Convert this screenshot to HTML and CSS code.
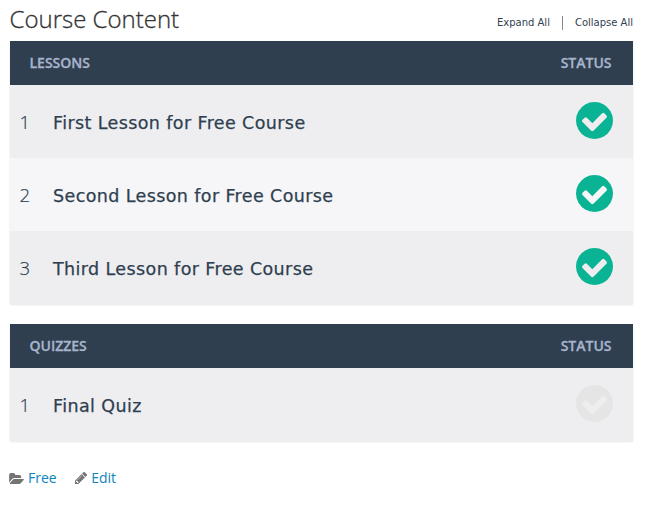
FILE: index.html
```html
<!DOCTYPE html>
<html lang="en">
<head>
<meta charset="utf-8">
<title>Course Content</title>
<link rel="stylesheet" href="styles.css">
</head>
<body>
<svg class="symbols" aria-hidden="true">
  <symbol id="check" viewBox="128 128 1536 1536"><path d="M1412 734q0-28-18-46l-91-90q-19-19-45-19t-45 19l-408 407-226-226q-19-19-45-19t-45 19l-91 90q-18 18-18 46 0 27 18 45l362 362q19 19 45 19 27 0 46-19l543-543q18-18 18-45zm252 162q0 209-103 385.5t-279.5 279.5-385.5 103-385.5-103-279.5-279.5-103-385.5 103-385.5 279.5-279.5 385.5-103 385.5 103 279.5 279.5 103 385.5z"/></symbol>
  <symbol id="folder" viewBox="64 128 1880 1408"><path d="M1943 952q0 31-31 66l-336 396q-43 51-120.5 86.5t-143.5 35.5h-1088q-34 0-60.5-13t-26.5-43q0-31 31-66l336-396q43-51 120.5-86.5t143.5-35.5h1088q34 0 60.5 13t26.5 43zm-343-344v160h-832q-94 0-197 47.5t-164 119.5l-337 396-5 6q0-4-.5-12.5t-.5-12.5v-960q0-92 66-158t158-66h320q92 0 158 66t66 158v32h544q92 0 158 66t66 158z"/></symbol>
  <symbol id="pencil" viewBox="128 149 1515 1515"><path d="M491 1536l91-91-235-235-91 91v107h128v128h107zm523-928q0-22-22-22-10 0-17 7l-542 542q-7 7-7 17 0 22 22 22 10 0 17-7l542-542q7-7 7-17zm-54-192l416 416-832 832h-416v-416zm683 96q0 53-37 90l-166 166-416-416 166-165q36-38 90-38 53 0 91 38l235 234q37 39 37 91z"/></symbol>
</svg>
<main class="course">
  <header class="top">
    <h1>Course Content</h1>
    <nav class="toggles"><a>Expand All</a><span class="divider"></span><a>Collapse All</a></nav>
  </header>
  <section class="panel">
    <div class="heading"><span>LESSONS</span><span>STATUS</span></div>
    <div class="row"><span class="num">1</span><a class="title">First Lesson for Free Course</a><svg class="status"><use href="#check"/></svg></div>
    <div class="row even"><span class="num">2</span><a class="title">Second Lesson for Free Course</a><svg class="status"><use href="#check"/></svg></div>
    <div class="row"><span class="num">3</span><a class="title">Third Lesson for Free Course</a><svg class="status"><use href="#check"/></svg></div>
  </section>
  <section class="panel">
    <div class="heading"><span>QUIZZES</span><span>STATUS</span></div>
    <div class="row"><span class="num">1</span><a class="title">Final Quiz</a><svg class="status pending"><use href="#check"/></svg></div>
  </section>
  <footer class="meta">
    <svg class="folder"><use href="#folder"/></svg><a>Free</a>
    <svg class="pencil"><use href="#pencil"/></svg><a>Edit</a>
  </footer>
</main>
</body>
</html>
```
FILE: styles.css
```css
* { box-sizing: border-box; }
body { margin: 0; background: #fff; font-family: "Open Sans", sans-serif; }
.symbols { display: none; }
.course { width: 623px; margin-left: 10px; }
.top { display: flex; justify-content: space-between; height: 41px; }
h1 { margin: 2px 0 0 -.5px; font-size: 24px; line-height: 34px; font-weight: 300; color: #333; white-space: nowrap; -webkit-text-stroke: .3px; }
.toggles { display: flex; align-items: center; height: 16px; margin-top: 15px; font: 10px/16px "DejaVu Sans", sans-serif; color: #2f3f50; white-space: nowrap; }
.divider { width: 1px; height: 14px; margin: 0 12px; background: #888; }
.panel { margin-bottom: 20px; box-shadow: 0 1px 2px rgba(0, 0, 0, .1); }
.heading { display: flex; align-items: center; justify-content: space-between; height: 44px; padding: 0 21.5px 2px 19.5px; background: #2f3f50; color: #a8b4cc; font-size: 14px; font-weight: 600; -webkit-text-stroke: .3px; }
.row { display: flex; align-items: center; height: 73px; padding: 0 20.5px 0 9.5px; background: #eeeef0; color: #2f3f50; }
.even { background: #f6f6f8; }
.num { width: 33.5px; font-size: 18.5px; line-height: 24px; font-weight: 300; -webkit-text-stroke: .2px; }
.title { flex: 1; font: 17.5px/24px "DejaVu Sans", sans-serif; letter-spacing: .39px; padding-top: 2px; -webkit-text-stroke: .25px; }
.status { width: 37px; height: 37px; margin-bottom: 2px; fill: #0ab394; }
.pending { fill: #e5e5e6; }
.meta { display: flex; align-items: center; height: 20px; margin-top: 27px; font-size: 14px; line-height: 20px; color: #0c84be; }
.folder { width: 15px; height: 11px; margin: 0 4px 0 -1px; fill: #747474; }
.pencil { width: 12px; height: 12px; margin: 0 4px 0 18.5px; fill: #747474; }
```
